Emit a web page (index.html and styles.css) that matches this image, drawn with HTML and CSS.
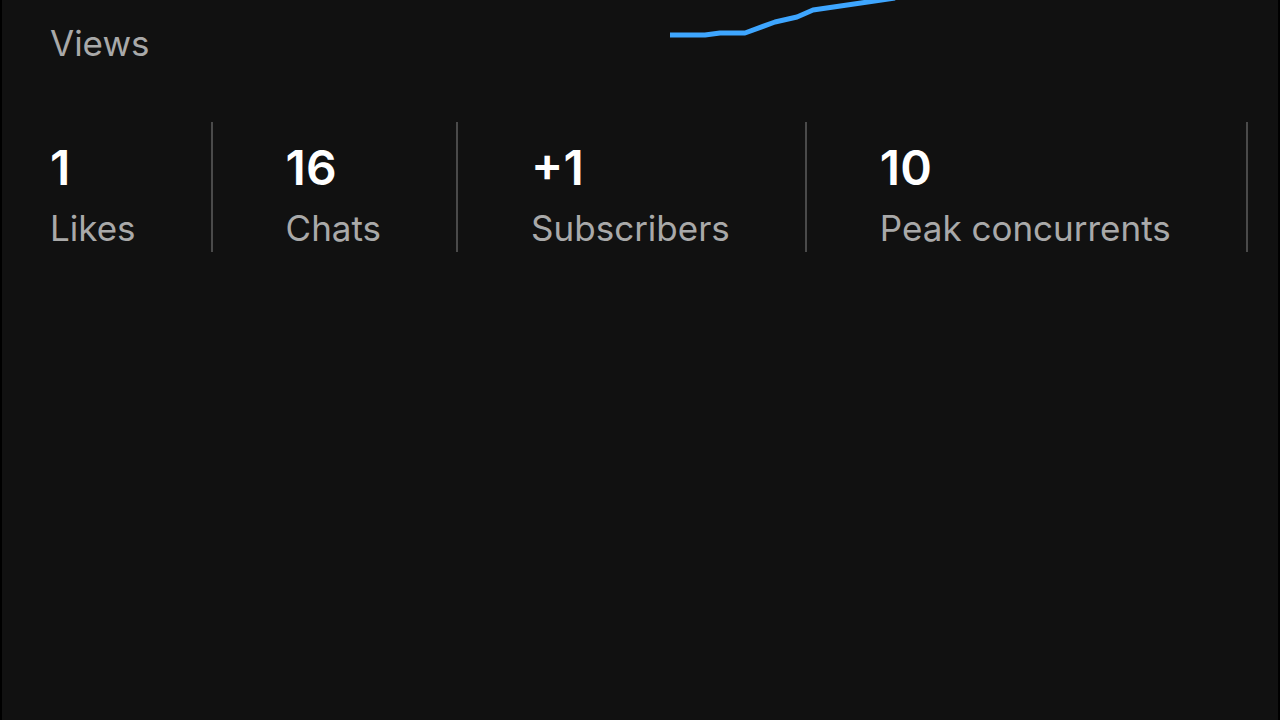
FILE: index.html
```html
<!DOCTYPE html>
<html lang="en">
<head>
    <meta charset="UTF-8">
    <meta name="viewport" content="width=device-width, initial-scale=1.0">
    <title>Live stream stats</title>
    <link rel="stylesheet" href="styles.css">
</head>
<body>
    <div class="screen">
        <div class="chart-area">
            <div class="chart-label">Views</div>
            <svg class="chart-line" width="1280" height="60" viewBox="0 0 1280 60">
                <polyline points="670,35 705,35 720,33 745,33 775,22 797,17 813,10 895,-2" fill="none" stroke="#3ea6ff" stroke-width="5" stroke-linejoin="round"/>
            </svg>
        </div>
        <div class="stats">
            <div class="stat">
                <div class="stat-value">1</div>
                <div class="stat-label">Likes</div>
            </div>
            <div class="stat">
                <div class="stat-value">16</div>
                <div class="stat-label">Chats</div>
            </div>
            <div class="stat">
                <div class="stat-value">+1</div>
                <div class="stat-label">Subscribers</div>
            </div>
            <div class="stat">
                <div class="stat-value">10</div>
                <div class="stat-label">Peak concurrents</div>
            </div>
        </div>
    </div>
</body>
</html>
```

FILE: styles.css
```css
body {
    margin: 0;
    background-color: #000;
    font-family: Inter, "Liberation Sans", Arial, sans-serif;
}
.screen {
    height: 720px;
    margin: 0 2px;
    background-color: #111111;
    overflow: hidden;
}
.chart-area {
    position: relative;
    height: 122px;
}
.chart-label {
    position: relative;
    z-index: 1;
    padding: 22px 0 0 48px;
    font-size: 35px;
    line-height: 42px;
    color: #a9a9a9;
}
.chart-line {
    position: absolute;
    top: 0;
    left: -2px;
}
.stats {
    display: flex;
}
.stat {
    padding: 0 75px 0 73px;
    border-right: 2px solid #4a4a4a;
    height: 130px;
    box-sizing: border-box;
}
.stat:first-child {
    padding-left: 48px;
}
.stat-value {
    padding-top: 21px;
    font-size: 48px;
    font-weight: 600;
    line-height: 50px;
    color: #fff;
}
.stat-label {
    padding-top: 15px;
    font-size: 35px;
    line-height: 40px;
    color: #a9a9a9;
}
```
